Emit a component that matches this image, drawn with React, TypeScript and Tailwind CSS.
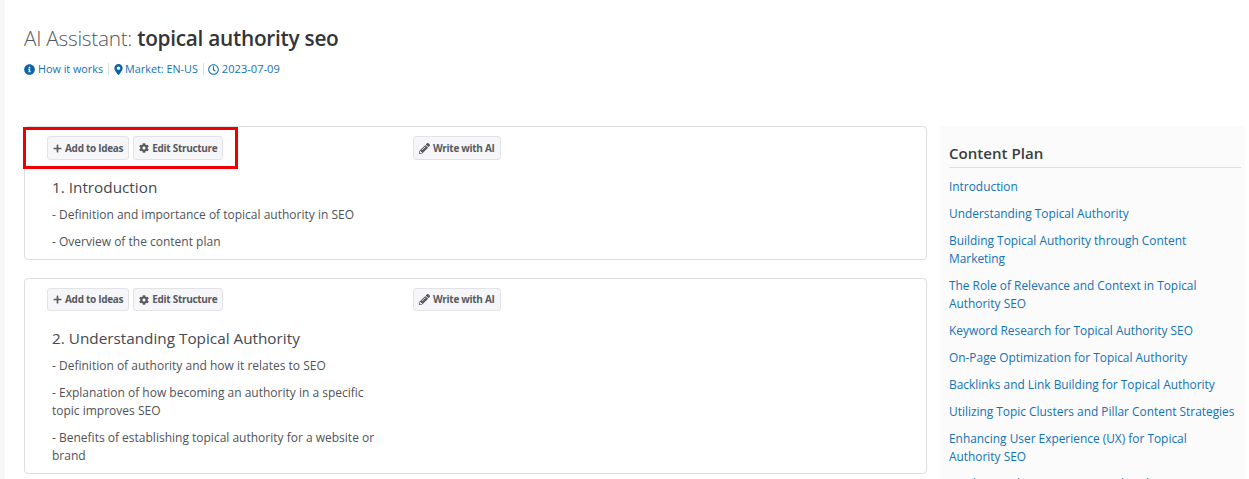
import React from 'react';
import { FaInfoCircle, FaMapMarkerAlt, FaRegClock, FaPlus, FaCog, FaPencilAlt } from 'react-icons/fa';

type Section = {
    title: string;
    points: string[];
};

const sections: Section[] = [
    {
        title: '1. Introduction',
        points: ['- Definition and importance of topical authority in SEO', '- Overview of the content plan'],
    },
    {
        title: '2. Understanding Topical Authority',
        points: [
            '- Definition of authority and how it relates to SEO',
            '- Explanation of how becoming an authority in a specific topic improves SEO',
            '- Benefits of establishing topical authority for a website or brand',
        ],
    },
];

const planLinks = [
    'Introduction',
    'Understanding Topical Authority',
    'Building Topical Authority through Content Marketing',
    'The Role of Relevance and Context in Topical Authority SEO',
    'Keyword Research for Topical Authority SEO',
    'On-Page Optimization for Topical Authority',
    'Backlinks and Link Building for Topical Authority',
    'Utilizing Topic Clusters and Pillar Content Strategies',
    'Enhancing User Experience (UX) for Topical Authority SEO',
    'Tracking and Measuring Topical Authority Success',
];

const ActionButton = ({ icon, label, first }: { icon: React.ReactNode; label: string; first: boolean }) => (
    <button className={`flex items-center gap-[3px] rounded-[3px] border border-[#e2e3e6] bg-[#f6f6f8] px-[5px] text-[10px] font-bold tracking-[-0.3px] text-[#565a60] ${first ? 'h-[24px]' : 'h-[23px]'}`}>
        {icon}
        {label}
    </button>
);

const SectionCard = ({ section, first }: { section: Section; first: boolean }) => (
    <div className={`rounded-[4px] border border-[#dcdddf] bg-white pl-[27px] pt-[9px] ${first ? 'h-[134px]' : 'h-[196px]'}`}>
        <div className="flex">
            <div className="ml-[-5px] flex w-[366px] gap-[4px]">
                <ActionButton first={first} icon={<FaPlus size={9} />} label="Add to Ideas" />
                <ActionButton first={first} icon={<FaCog size={10} />} label="Edit Structure" />
            </div>
            <ActionButton first={first} icon={<FaPencilAlt size={11} />} label="Write with AI" />
        </div>
        <h3 className="mt-[16px] text-[15.3px] leading-[22px] text-[#45484d]">{section.title}</h3>
        <div className="mt-[8px] w-[330px] text-[12px] leading-[18px] text-[#4f5358]">
            {section.points.map((point) => (
                <p key={point} className="mb-[9px]">{point}</p>
            ))}
        </div>
    </div>
);

export default function App() {
    return (
        <div className="flex h-[479px] w-[1249px] overflow-hidden bg-white font-['Open_Sans',sans-serif]">
            <div className="w-[5px] shrink-0 bg-[#f7f7f7]" />
            <div className="relative flex-1 pl-[19px]">
                <h1 className="mt-[23px] text-[20.8px] leading-[30px] font-light tracking-[-0.27px] text-[#55585c]">
                    AI Assistant: <span className="font-semibold text-[#333538]">topical authority seo</span>
                </h1>
                <div className="mt-[9px] flex h-[14px] items-center text-[10.8px] text-[#1272b5]">
                    <FaInfoCircle size={11} className="mr-[3px] text-[#0b63a5]" />
                    <span>How it works</span>
                    <span className="ml-[5px] mr-[4px] h-[12px] w-px bg-[#dddddd]" />
                    <FaMapMarkerAlt size={11} className="mr-[1px] text-[#0b63a5]" />
                    <span>Market: EN-US</span>
                    <span className="ml-[5px] mr-[4px] h-[12px] w-px bg-[#dddddd]" />
                    <FaRegClock size={11} className="mr-[3px]" />
                    <span className="text-[11.1px]">2023-07-09</span>
                </div>
                <div className="mt-[50px] flex">
                    <div className="flex w-[903px] shrink-0 flex-col gap-[18px]">
                        {sections.map((section, idx) => (
                            <SectionCard key={section.title} section={section} first={idx === 0} />
                        ))}
                    </div>
                    <aside className="ml-[13px] h-[360px] w-[305px] shrink-0 bg-[#fbfbfb] pl-[9px] pr-[4px] pt-[17px]">
                        <h2 className="border-b border-[#dfdfdf] pb-[4px] text-[15.1px] leading-[20px] font-semibold text-[#3a3d40]">Content Plan</h2>
                        <ul className="mt-[9px]">
                            {planLinks.map((link) => (
                                <li key={link} className="mb-[9px] text-[11.9px] leading-[18px] text-[#1272b5]">{link}</li>
                            ))}
                        </ul>
                    </aside>
                </div>
                {/* 紅色標註框 */}
                <div className="absolute left-[18px] top-[127px] h-[42px] w-[215px] border-[3px] border-[#ee0000]" />
            </div>
        </div>
    );
}
